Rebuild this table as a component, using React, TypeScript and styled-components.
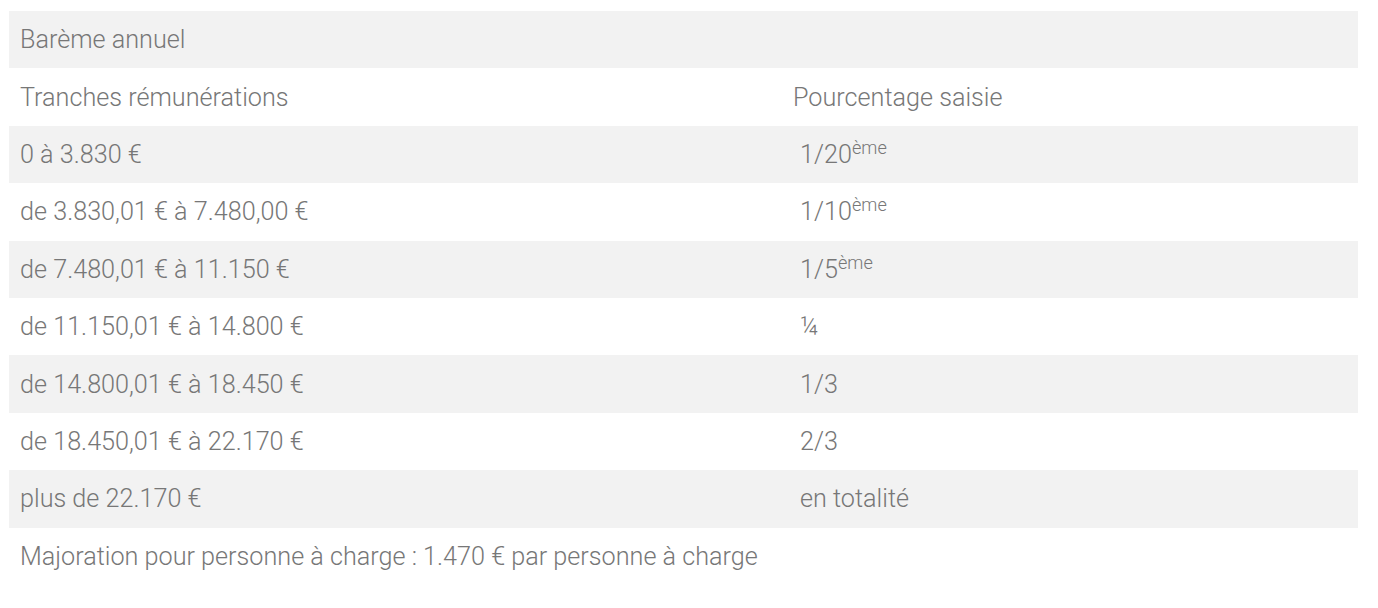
import React from 'react'
import styled, { createGlobalStyle } from 'styled-components'

const GlobalStyle = createGlobalStyle`
  body {
    margin: 0;
    background: #fff;
    font-family: Roboto, "Liberation Sans", sans-serif;
  }
`

type Tranche = { range: string; part: string; sup?: string }

const tranches: Tranche[] = [
  { range: '0 à 3.830 €', part: '1/20', sup: 'ème' },
  { range: 'de 3.830,01 € à 7.480,00 €', part: '1/10', sup: 'ème' },
  { range: 'de 7.480,01 € à 11.150 €', part: '1/5', sup: 'ème' },
  { range: 'de 11.150,01 € à 14.800 €', part: '¼' },
  { range: 'de 14.800,01 € à 18.450 €', part: '1/3' },
  { range: 'de 18.450,01 € à 22.170 €', part: '2/3' },
  { range: 'plus de 22.170 €', part: 'en totalité' },
]

const App = () => {
  return (
    <Page>
      <GlobalStyle />
      <Table>
        <colgroup>
          <RangeCol />
          <col />
        </colgroup>
        <tbody>
          <Row>
            <Cell colSpan={2}>Barème annuel</Cell>
          </Row>
          <Row>
            <Cell>Tranches rémunérations</Cell>
            <Cell>Pourcentage saisie</Cell>
          </Row>
          {tranches.map((t) => (
            <Row key={t.range}>
              <Cell>{t.range}</Cell>
              <Cell $indent>
                {t.part}
                {t.sup && <Sup>{t.sup}</Sup>}
              </Cell>
            </Row>
          ))}
          <Row>
            <Cell colSpan={2}>Majoration pour personne à charge : 1.470 € par personne à charge</Cell>
          </Row>
        </tbody>
      </Table>
    </Page>
  )
}

export default App

const Page = styled.div`
  padding: 11px 20px 0 9px;
`
const Table = styled.table`
  width: 1349px;
  border-collapse: collapse;
  table-layout: fixed;
  color: #777;
  font-size: 25.2px;
  font-weight: 300;
`
const RangeCol = styled.col`
  width: 773px;
`
const Row = styled.tr`
  height: 57.4px;
  &:nth-child(odd) {
    background-color: #f2f2f2;
  }
  &:last-child {
    background-color: transparent;
  }
`
const Cell = styled.td<{ $indent?: boolean }>`
  padding: 0 11px;
  padding-left: ${(p) => (p.$indent ? '18px' : '11px')};
  vertical-align: middle;
  white-space: nowrap;
`
const Sup = styled.sup`
  font-size: 0.72em;
  line-height: 0;
`
